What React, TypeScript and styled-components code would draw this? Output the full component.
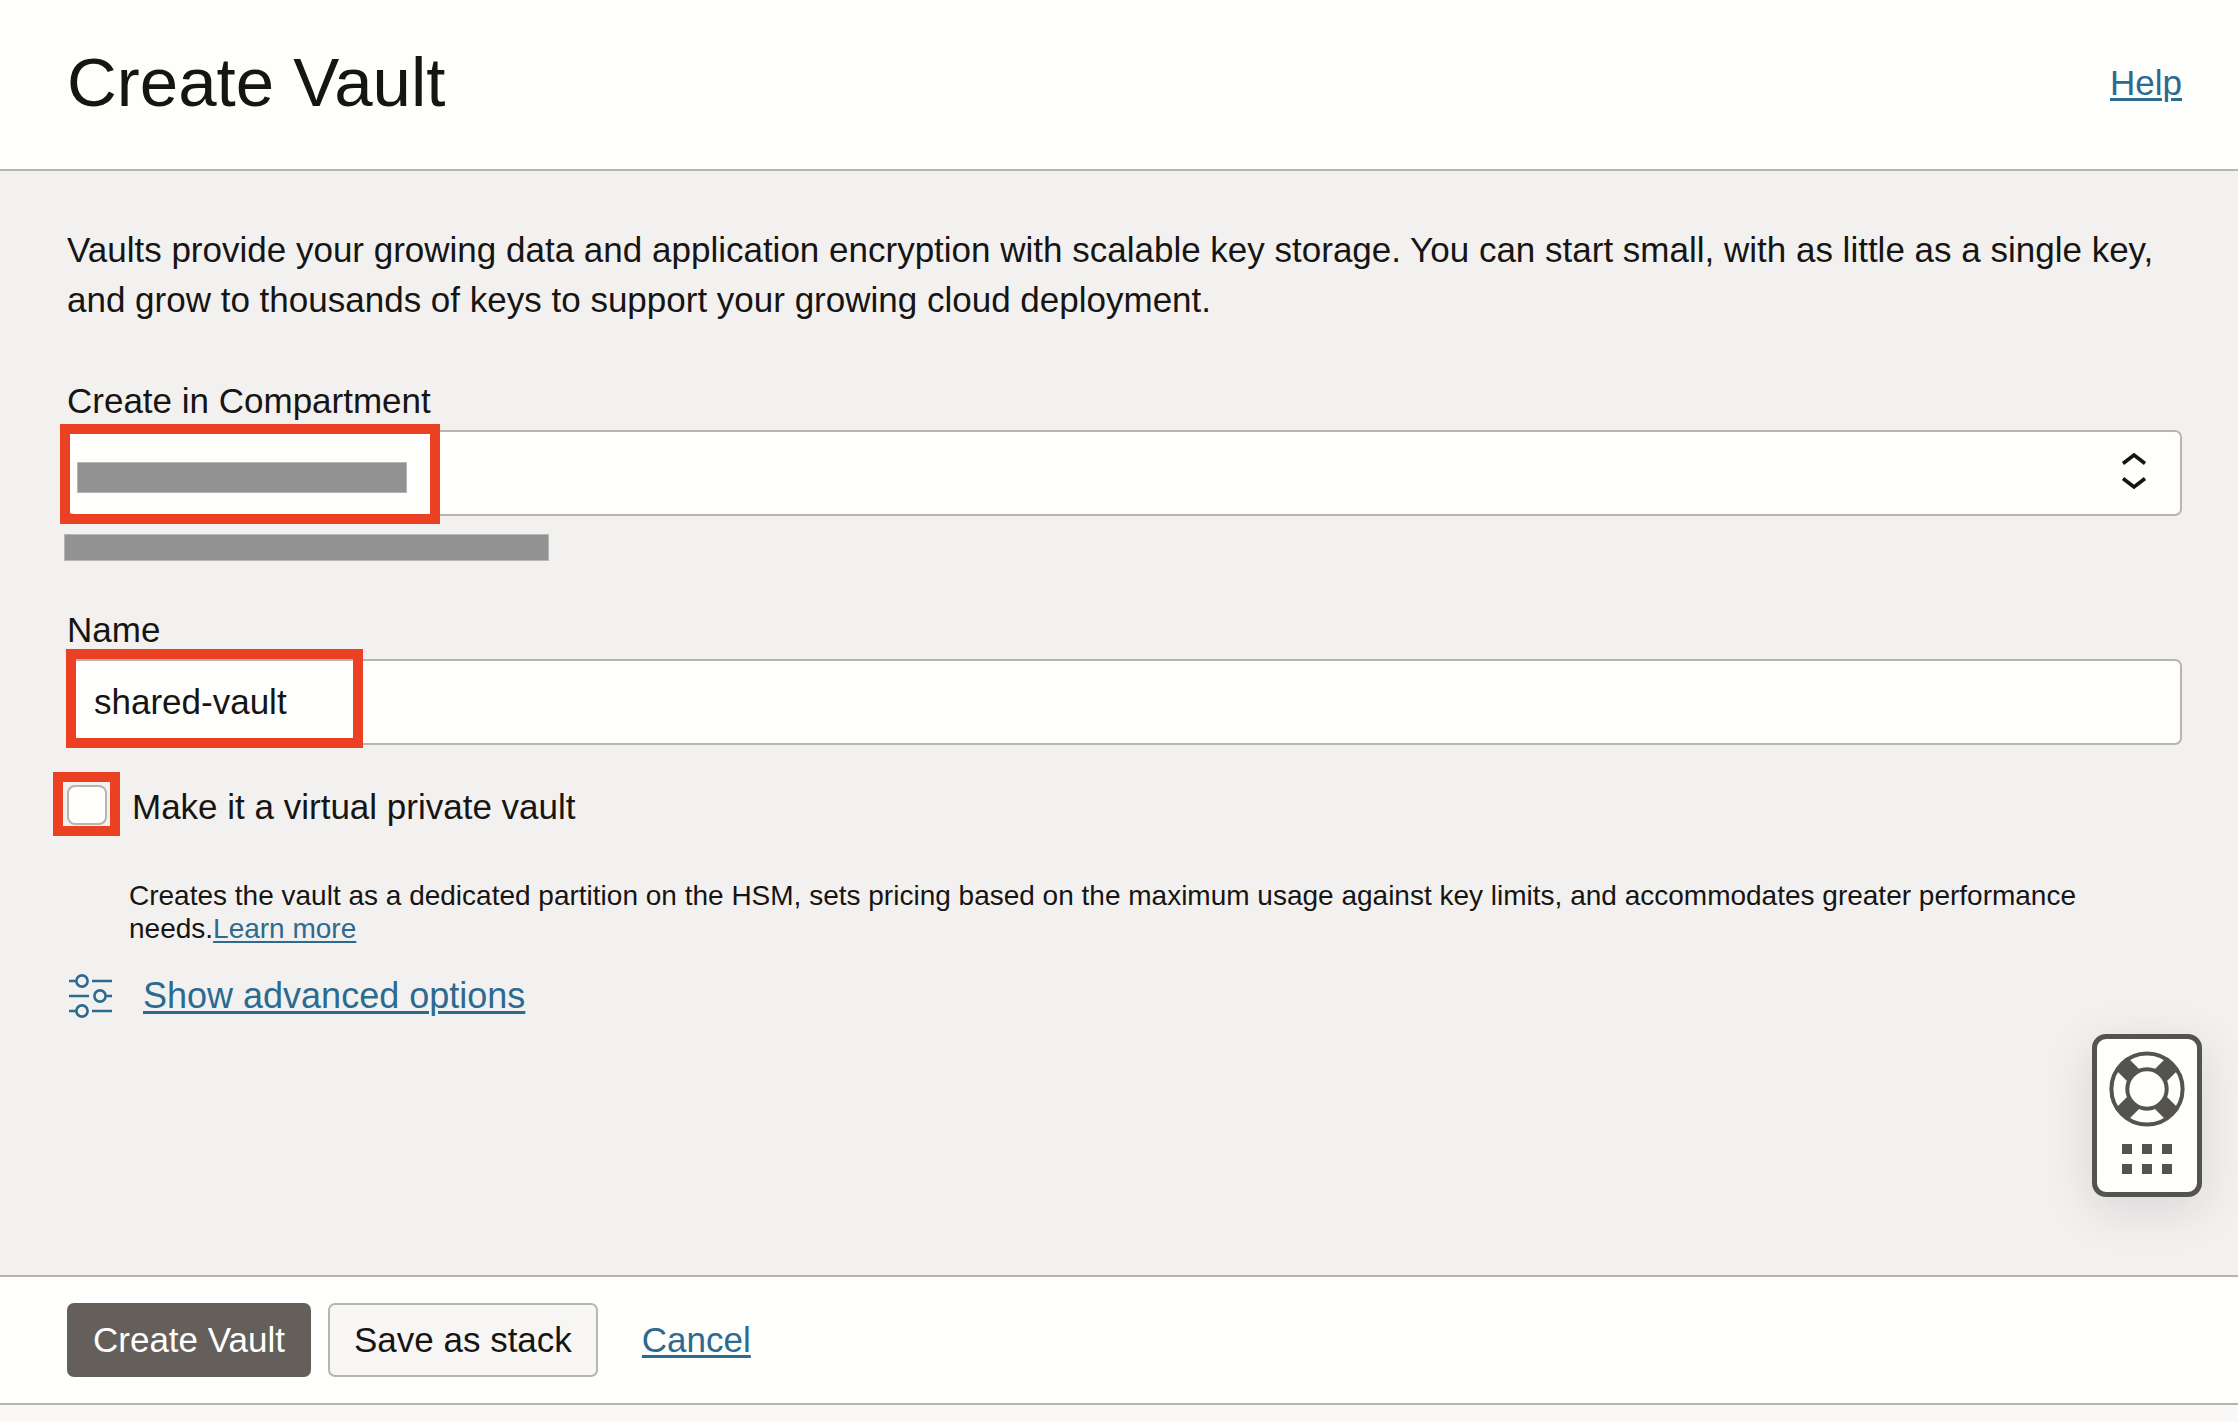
import React, { useState } from "react";
import styled, { createGlobalStyle } from "styled-components";

const color = {
  text: "#161513",
  link: "#2c6a8f",
  line: "#bab4ae",
  paper: "#fefefc",
  page: "#f3f1f0",
  mark: "#ec4025",
  redact: "#929292",
  icon: "#54534e",
};

const GlobalStyle = createGlobalStyle`
  *, *::before, *::after { box-sizing: border-box; }
  body {
    margin: 0;
    background: ${color.page};
    color: ${color.text};
    font: 35px/50px "Liberation Sans", Arial, sans-serif;
  }
  input, select, button { font: inherit; color: inherit; }
`;

const Page = styled.div`
  min-height: 100vh;
  display: flex;
  flex-direction: column;
`;

const Header = styled.header`
  display: flex;
  align-items: center;
  justify-content: space-between;
  padding: 36px 56px 39px 67px;
  background: ${color.paper};
  border-bottom: 2px solid ${color.line};
`;

const Title = styled.h1`
  margin: 0;
  font-size: 69px;
  line-height: 94px;
  font-weight: 400;
`;

const Link = styled.a`
  color: ${color.link};
  text-decoration: underline;
  text-decoration-thickness: ${(p: { $thin?: boolean }) => (p.$thin ? "2px" : "3px")};
  text-underline-offset: 3px;
`;

const Main = styled.main`
  flex: 1;
  padding: 54px 56px 54px 67px;
`;

const Intro = styled.p`
  margin: 0 0 51px;
`;

const Field = styled.div`
  display: flex;
  flex-direction: column;
`;

const Label = styled.label`
  line-height: 50px;
  margin-bottom: 4px;
`;

const Control = styled.div`
  position: relative;
  display: flex;
`;

const controlBox = `
  flex: 1;
  min-width: 0;
  height: 86px;
  padding: 0 25px;
  border: 2px solid ${color.line};
  border-radius: 7px;
  background: ${color.paper};
  outline: none;
`;

const Select = styled.select`
  ${controlBox}
  appearance: none;
`;

const TextInput = styled.input`
  ${controlBox}
`;

const Chevrons = styled.svg`
  position: absolute;
  right: 34px;
  top: 21px;
  pointer-events: none;
`;

const Highlight = styled.span<{ $x: number; $y: number; $w: number; $h: number }>`
  position: absolute;
  left: ${(p) => p.$x}px;
  top: ${(p) => p.$y}px;
  width: ${(p) => p.$w}px;
  height: ${(p) => p.$h}px;
  border: 10px solid ${color.mark};
  pointer-events: none;
`;

const ValueRedaction = styled.span`
  position: absolute;
  left: 10px;
  top: 32px;
  width: 330px;
  height: 31px;
  background: ${color.redact};
  border: 1px solid #b5b5b4;
  pointer-events: none;
`;

const Hint = styled.div`
  display: flex;
  height: 50px;
  margin: 18px 0 21px -3px;
`;

const HintRedaction = styled.span`
  width: 485px;
  height: 27px;
  background: ${color.redact};
  border: 1px solid #b5b5b4;
`;

const CheckRow = styled.div`
  display: flex;
  align-items: center;
  gap: 25px;
  margin-top: 37px;
`;

const CheckWrap = styled.span`
  position: relative;
  display: flex;
`;

const Checkbox = styled.input`
  appearance: none;
  width: 40px;
  height: 40px;
  margin: 0 0 4px;
  border: 2px solid ${color.line};
  border-radius: 8px;
  background: ${color.paper};
  &:checked { background: ${color.link}; }
`;

const CheckHelp = styled.p`
  margin: 47px 0 0 62px;
  font-size: 28px;
  line-height: 33px;
`;

const Advanced = styled.div`
  display: flex;
  align-items: center;
  gap: 30px;
  margin-top: 26px;
  font-size: 36px;
`;

const Footer = styled.footer`
  display: flex;
  align-items: center;
  gap: 17px;
  padding: 26px 67px;
  background: ${color.paper};
  border: solid ${color.line};
  border-width: 2px 0;
`;

const Button = styled.button<{ $primary?: boolean }>`
  height: 74px;
  padding: 0 24px;
  border: 2px solid ${(p) => (p.$primary ? "#655f5b" : color.line)};
  border-radius: 7px;
  background: ${(p) => (p.$primary ? "#655f5b" : "#f8f6f5")};
  color: ${(p) => (p.$primary ? "#ffffff" : color.text)};
`;

const Cancel = styled(Link)`
  margin-left: 27px;
`;

const BottomStrip = styled.div`
  height: 17px;
  background: #fbf9f8;
`;

const Support = styled.button`
  position: fixed;
  right: 36px;
  bottom: 225px;
  width: 110px;
  height: 163px;
  padding: 12px 0 0;
  display: flex;
  flex-direction: column;
  align-items: center;
  gap: 17px;
  border: 5px solid ${color.icon};
  border-radius: 14px;
  background: ${color.paper};
  box-shadow: 0 12px 48px rgba(22, 21, 19, 0.12);
`;

const Dots = styled.span`
  display: grid;
  grid-template-columns: repeat(3, 10px);
  gap: 10px;
`;

const Dot = styled.span`
  height: 10px;
  background: ${color.icon};
`;

const SlidersIcon = () => (
  <svg width="46" height="46" viewBox="0 0 46 46" fill="none" stroke={color.link} strokeWidth="2.6" aria-hidden="true">
    <circle cx="15" cy="8" r="5.6" />
    <circle cx="33" cy="23" r="5.6" />
    <circle cx="15" cy="38" r="5.6" />
    <path d="M2 8h7.4M25 8h20M2 23h20M38.6 23H45M2 38h7.4M25 38h20" />
  </svg>
);

const LifebuoyIcon = () => (
  <svg width="76" height="76" viewBox="-38 -38 76 76" fill="none" stroke={color.icon} aria-hidden="true">
    <path d="M-14 -14L-24.5 -24.5M14 -14L24.5 -24.5M-14 14L-24.5 24.5M14 14L24.5 24.5" strokeWidth="17" />
    <circle r="35.6" strokeWidth="4" />
    <circle r="19.7" strokeWidth="4" />
  </svg>
);

export default function App() {
  const [name, setName] = useState("shared-vault");
  const [isPrivate, setPrivate] = useState(false);

  return (
    <Page>
      <GlobalStyle />
      <Header>
        <Title>Create Vault</Title>
        <Link href="#help">Help</Link>
      </Header>

      <Main>
        <Intro>
          Vaults provide your growing data and application encryption with scalable key storage. You can start small,
          with as little as a single key, and grow to thousands of keys to support your growing cloud deployment.
        </Intro>

        <Field>
          <Label htmlFor="compartment">Create in Compartment</Label>
          <Control>
            <Select id="compartment">
              <option value=""></option>
            </Select>
            <Chevrons width="28" height="40" viewBox="0 0 28 40" fill="none" stroke={color.text} strokeWidth="3.6" aria-hidden="true">
              <path d="M3 12.5L14 4L25 12.5M3 27.5L14 36L25 27.5" />
            </Chevrons>
            <ValueRedaction />
            <Highlight $x={-7} $y={-6} $w={380} $h={100} />
          </Control>
          <Hint>
            <HintRedaction />
          </Hint>
        </Field>

        <Field>
          <Label htmlFor="name">Name</Label>
          <Control>
            <TextInput id="name" type="text" value={name} onChange={(e) => setName(e.target.value)} />
            <Highlight $x={-1} $y={-10} $w={297} $h={99} />
          </Control>
        </Field>

        <CheckRow>
          <CheckWrap>
            <Checkbox id="private" type="checkbox" checked={isPrivate} onChange={(e) => setPrivate(e.target.checked)} />
            <Highlight $x={-14} $y={-13} $w={67} $h={64} />
          </CheckWrap>
          <label htmlFor="private">Make it a virtual private vault</label>
        </CheckRow>
        <CheckHelp>
          Creates the vault as a dedicated partition on the HSM, sets pricing based on the maximum usage against key
          limits, and accommodates greater performance needs.
          <Link $thin href="#learn">Learn more</Link>
        </CheckHelp>

        <Advanced>
          <SlidersIcon />
          <Link href="#advanced">Show advanced options</Link>
        </Advanced>
      </Main>

      <Footer>
        <Button $primary type="button">Create Vault</Button>
        <Button type="button">Save as stack</Button>
        <Cancel href="#cancel">Cancel</Cancel>
      </Footer>
      <BottomStrip />

      <Support type="button" aria-label="Support">
        <LifebuoyIcon />
        <Dots>
          {Array.from({ length: 6 }, (_, i) => (
            <Dot key={i} />
          ))}
        </Dots>
      </Support>
    </Page>
  );
}
